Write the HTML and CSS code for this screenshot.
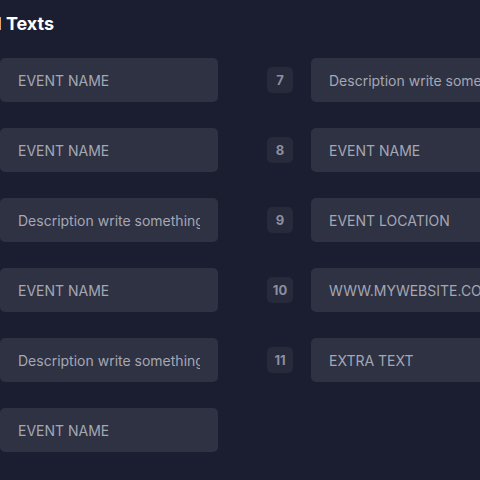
FILE: index.html
```html
<!DOCTYPE html>
<html lang="en">
<head>
<meta charset="utf-8">
<title>Additional Texts</title>
<link rel="stylesheet" href="styles.css">
</head>
<body>
<main class="page">
  <h2 class="title">Additional Texts</h2>
  <div class="columns">
    <div class="column">
      <div class="row"><span class="badge">1</span><div class="field"><span class="field-text">EVENT NAME</span></div></div>
      <div class="row"><span class="badge">2</span><div class="field"><span class="field-text">EVENT NAME</span></div></div>
      <div class="row"><span class="badge">3</span><div class="field"><span class="field-text">Description write something here</span></div></div>
      <div class="row"><span class="badge">4</span><div class="field"><span class="field-text">EVENT NAME</span></div></div>
      <div class="row"><span class="badge">5</span><div class="field"><span class="field-text">Description write something here</span></div></div>
      <div class="row"><span class="badge">6</span><div class="field"><span class="field-text">EVENT NAME</span></div></div>
    </div>
    <div class="column">
      <div class="row"><span class="badge">7</span><div class="field"><span class="field-text">Description write something here</span></div></div>
      <div class="row"><span class="badge">8</span><div class="field"><span class="field-text">EVENT NAME</span></div></div>
      <div class="row"><span class="badge">9</span><div class="field"><span class="field-text">EVENT LOCATION</span></div></div>
      <div class="row"><span class="badge">10</span><div class="field"><span class="field-text">WWW.MYWEBSITE.COM</span></div></div>
      <div class="row"><span class="badge">11</span><div class="field"><span class="field-text">EXTRA TEXT</span></div></div>
    </div>
  </div>
</main>
</body>
</html>
```
FILE: styles.css
```css
html, body {
  margin: 0;
  padding: 0;
  background: #1b1e31;
  overflow: hidden;
}
body {
  width: 480px;
  height: 480px;
  font-family: "Inter", "Roboto", sans-serif;
}
.page {
  margin-left: -44px;
  padding-top: 12px;
}
.title {
  margin: 0 0 22px -44px;
  font-family: "Inter", sans-serif;
  font-weight: 700;
  font-size: 18px;
  line-height: 24px;
  color: #ffffff;
  white-space: nowrap;
}
.columns {
  display: flex;
  gap: 49px;
}
.column {
  display: flex;
  flex-direction: column;
  gap: 26px;
}
.row {
  display: flex;
  align-items: center;
  gap: 18px;
}
.badge {
  flex: none;
  width: 26px;
  height: 26px;
  border-radius: 5px;
  background: #262a3b;
  color: #8b8fa0;
  font-family: "Inter", sans-serif;
  font-weight: 700;
  font-size: 13px;
  display: flex;
  align-items: center;
  justify-content: center;
}
.field {
  flex: none;
  width: 218px;
  height: 44px;
  box-sizing: border-box;
  padding: 0 18px;
  border-radius: 5px;
  background: #2f3243;
  display: flex;
  align-items: center;
}
.field-text {
  display: block;
  width: 100%;
  overflow: hidden;
  white-space: nowrap;
  color: #a4a7b4;
  font-size: 14px;
}
```
